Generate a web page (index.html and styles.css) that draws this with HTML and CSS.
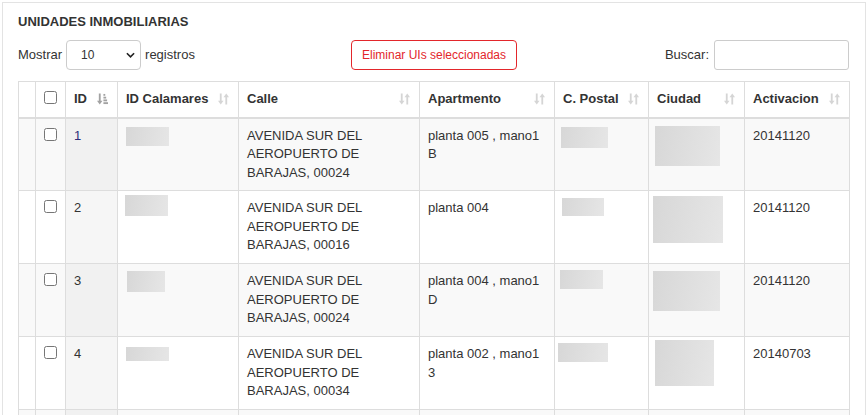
FILE: index.html
```html
<!DOCTYPE html>
<html lang="es">
<head>
<meta charset="utf-8">
<title>Unidades inmobiliarias</title>
<link rel="stylesheet" href="styles.css">
</head>
<body>
<div class="panel">
  <h2 class="title">UNIDADES INMOBILIARIAS</h2>
  <div class="controls">
    <div class="length">
      <span>Mostrar</span>
      <span class="select-wrap">
        <select class="select"><option>10</option><option>25</option><option>50</option></select>
        <svg class="chev" viewBox="0 0 10 6" width="9" height="6"><path d="M1 1l4 4 4-4" fill="none" stroke="#222" stroke-width="1.8"/></svg>
      </span>
      <span>registros</span>
    </div>
    <button class="btn-del" type="button">Eliminar UIs seleccionadas</button>
    <div class="search">
      <label for="q">Buscar:</label>
      <input id="q" class="search-input" type="search">
    </div>
  </div>

  <table class="grid">
    <colgroup>
      <col class="c0"><col class="c1"><col class="c2"><col class="c3"><col class="c4"><col class="c5"><col class="c6"><col class="c7"><col class="c8">
    </colgroup>
    <thead>
      <tr>
        <th></th>
        <th><input class="chk" type="checkbox"></th>
        <th><div class="th-in"><span>ID</span><svg class="si sorted" viewBox="0 0 12 12" width="11" height="12"><path d="M2 0h2v8h2l-3 4-3-4h2z"/><rect x="7" y="0.5" width="2" height="2"/><rect x="7" y="3.5" width="3" height="2"/><rect x="7" y="6.5" width="4" height="2"/><rect x="7" y="9.5" width="5" height="2"/></svg></div></th>
        <th><div class="th-in"><span>ID Calamares</span><svg class="si" viewBox="0 0 12 12" width="11" height="12"><path d="M2 0h2v8h2l-3 4-3-4h2zM8 12h2V4h2L9 0 6 4h2z"/></svg></div></th>
        <th><div class="th-in"><span>Calle</span><svg class="si" viewBox="0 0 12 12" width="11" height="12"><path d="M2 0h2v8h2l-3 4-3-4h2zM8 12h2V4h2L9 0 6 4h2z"/></svg></div></th>
        <th><div class="th-in"><span>Apartmento</span><svg class="si" viewBox="0 0 12 12" width="11" height="12"><path d="M2 0h2v8h2l-3 4-3-4h2zM8 12h2V4h2L9 0 6 4h2z"/></svg></div></th>
        <th><div class="th-in"><span>C. Postal</span><svg class="si" viewBox="0 0 12 12" width="11" height="12"><path d="M2 0h2v8h2l-3 4-3-4h2zM8 12h2V4h2L9 0 6 4h2z"/></svg></div></th>
        <th><div class="th-in"><span>Ciudad</span><svg class="si" viewBox="0 0 12 12" width="11" height="12"><path d="M2 0h2v8h2l-3 4-3-4h2zM8 12h2V4h2L9 0 6 4h2z"/></svg></div></th>
        <th><div class="th-in"><span>Activacion</span><svg class="si" viewBox="0 0 12 12" width="11" height="12"><path d="M2 0h2v8h2l-3 4-3-4h2zM8 12h2V4h2L9 0 6 4h2z"/></svg></div></th>
      </tr>
    </thead>
    <tbody>
      <tr class="odd">
        <td></td>
        <td><input class="chk" type="checkbox"></td>
        <td class="sorted-col id1">1</td>
        <td><span class="blur b1a"></span></td>
        <td>AVENIDA SUR DEL AEROPUERTO DE BARAJAS, 00024</td>
        <td>planta 005 , mano1 B</td>
        <td><span class="blur b1b"></span></td>
        <td><span class="blur b1c"></span></td>
        <td>20141120</td>
      </tr>
      <tr class="even">
        <td></td>
        <td><input class="chk" type="checkbox"></td>
        <td class="sorted-col">2</td>
        <td><span class="blur b2a"></span></td>
        <td>AVENIDA SUR DEL AEROPUERTO DE BARAJAS, 00016</td>
        <td>planta 004</td>
        <td><span class="blur b2b"></span></td>
        <td><span class="blur b2c"></span></td>
        <td>20141120</td>
      </tr>
      <tr class="odd">
        <td></td>
        <td><input class="chk" type="checkbox"></td>
        <td class="sorted-col">3</td>
        <td><span class="blur b3a"></span></td>
        <td>AVENIDA SUR DEL AEROPUERTO DE BARAJAS, 00024</td>
        <td>planta 004 , mano1 D</td>
        <td><span class="blur b3b"></span></td>
        <td><span class="blur b3c"></span></td>
        <td>20141120</td>
      </tr>
      <tr class="even">
        <td></td>
        <td><input class="chk" type="checkbox"></td>
        <td class="sorted-col">4</td>
        <td><span class="blur b4a"></span></td>
        <td>AVENIDA SUR DEL AEROPUERTO DE BARAJAS, 00034</td>
        <td>planta 002 , mano1 3</td>
        <td><span class="blur b4b"></span></td>
        <td><span class="blur b4c"></span></td>
        <td>20140703</td>
      </tr>
      <tr class="odd">
        <td></td>
        <td><input class="chk" type="checkbox"></td>
        <td class="sorted-col"></td>
        <td></td>
        <td></td>
        <td></td>
        <td></td>
        <td></td>
        <td></td>
      </tr>
    </tbody>
  </table>
</div>
</body>
</html>
```

FILE: styles.css
```css
* { box-sizing: border-box; }

html, body {
  margin: 0;
  padding: 0;
  background: #fff;
}

body {
  font-family: "Liberation Sans", Arial, Helvetica, sans-serif;
  font-size: 13px;
  line-height: 1.42857;
  color: #333;
}

.panel {
  margin: 2px;
  border: 1px solid #e3e3e3;
  padding: 9px 15px 20px;
}

.title {
  margin: 0 0 9px;
  font-size: 13px;
  line-height: 19px;
  font-weight: bold;
  color: #333;
}

.controls {
  display: grid;
  grid-template-columns: 1fr auto 1fr;
  align-items: center;
  height: 30px;
  margin-bottom: 11px;
}

.length {
  display: flex;
  align-items: center;
  gap: 4px;
}

.select-wrap {
  position: relative;
  display: inline-block;
}

.select {
  appearance: none;
  -webkit-appearance: none;
  width: 75px;
  height: 30px;
  border: 1px solid #ccc;
  border-radius: 4px;
  background: #fff;
  padding: 0 0 0 14px;
  font-family: inherit;
  font-size: 12px;
  color: #333;
}

.chev {
  position: absolute;
  right: 6px;
  top: 12px;
  pointer-events: none;
}

.btn-del {
  height: 30px;
  padding: 0 10px;
  border: 1px solid #e3262b;
  border-radius: 4px;
  background: #fff;
  color: #e3262b;
  font-family: inherit;
  font-size: 12px;
  line-height: 18px;
}

.search {
  display: flex;
  align-items: center;
  justify-content: flex-end;
  gap: 5px;
}

.search-input {
  width: 135px;
  height: 30px;
  border: 1px solid #ccc;
  border-radius: 3px;
  padding: 4px 6px;
  margin-right: 1px;
  font-family: inherit;
}

.grid {
  width: 100%;
  table-layout: fixed;
  border-collapse: collapse;
  border: 1px solid #ddd;
}

.c0 { width: 17px; }
.c1 { width: 30px; }
.c2 { width: 52px; }
.c3 { width: 121px; }
.c4 { width: 181px; }
.c5 { width: 135px; }
.c6 { width: 94px; }
.c7 { width: 96px; }
.c8 { width: 105px; }

.grid th,
.grid td {
  border: 1px solid #ddd;
  padding: 8px;
  vertical-align: top;
  text-align: left;
}

.grid th {
  font-weight: bold;
  border-bottom-width: 2px;
  background: #fff;
}

.grid tbody td {
  height: 73px;
}

.th-in {
  display: flex;
  justify-content: space-between;
  align-items: center;
}

.si {
  flex: none;
  fill: #333;
  opacity: 0.2;
  margin-right: 1px;
}

.si.sorted {
  opacity: 0.45;
}

.chk {
  display: block;
  margin: 1px 0 0 0;
  width: 13px;
  height: 13px;
}

.grid tr.odd td { background: #f9f9f9; }
.grid tr.even td { background: #fff; }
.grid tr.odd td.sorted-col { background: #f1f1f1; }
.grid tr.even td.sorted-col { background: #f6f6f6; }

.id1 { color: #2d2d7a; }

.blur {
  display: block;
  background: linear-gradient(100deg, #d7d7d7, #e6e6e6);
  filter: blur(0.4px);
}

.b1a { width: 43px; height: 19px; margin: 0 0 0 0; }
.b2a { width: 43px; height: 21px; margin: -4px 0 0 -1px; }
.b3a { width: 38px; height: 21px; margin: -1px 0 0 1px; }
.b4a { width: 43px; height: 14px; margin: 2px 0 0 0; }

.b1b { width: 47px; height: 21px; margin: 0 0 0 -2px; }
.b2b { width: 42px; height: 18px; margin: -1px 0 0 -1px; }
.b3b { width: 43px; height: 19px; margin: -2px 0 0 -3px; }
.b4b { width: 50px; height: 19px; margin: -2px 0 0 -5px; }

.b1c { width: 65px; height: 40px; margin: -1px 0 0 -2px; }
.b2c { width: 70px; height: 47px; margin: -3px 0 0 -4px; }
.b3c { width: 67px; height: 40px; margin: -1px 0 0 -4px; }
.b4c { width: 59px; height: 46px; margin: -5px 0 0 -2px; }
```
